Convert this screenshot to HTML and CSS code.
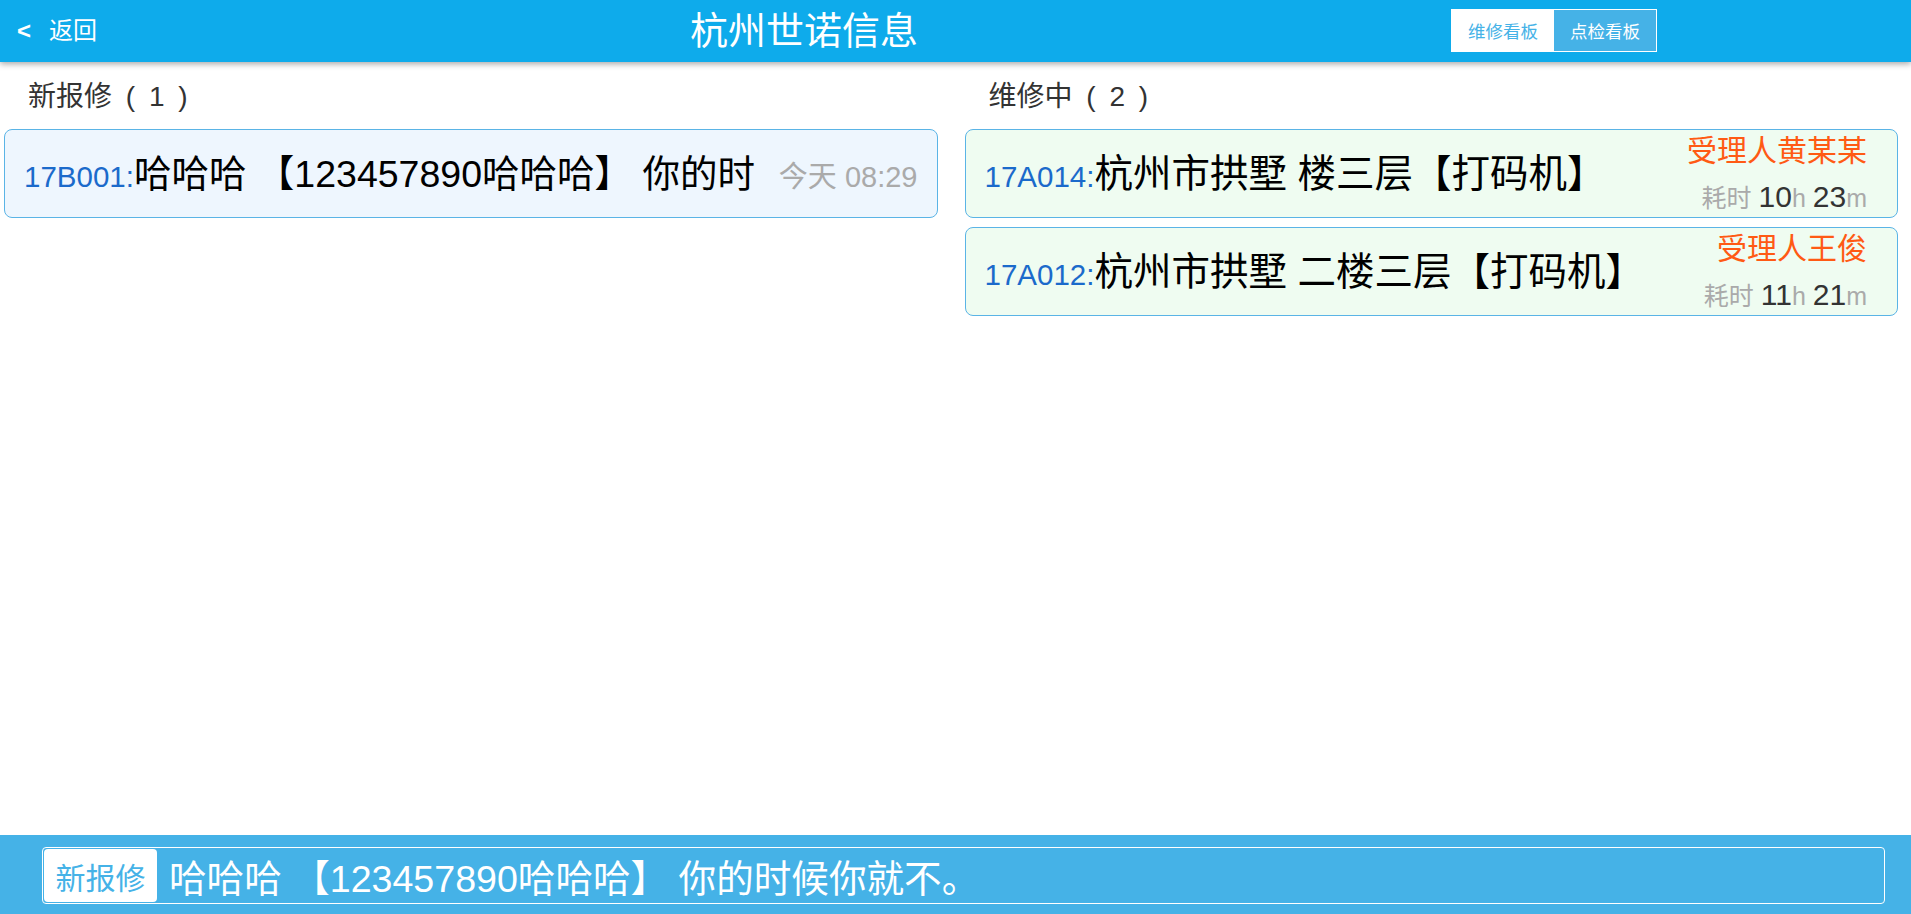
FILE: index.html
```html
<!DOCTYPE html>
<html lang="zh-CN">
<head>
<meta charset="utf-8">
<title>杭州世诺信息</title>
<link rel="stylesheet" href="styles.css">
</head>
<body>
<header class="header">
  <div class="back"><span class="back-arrow">&lt;</span><span>返回</span></div>
  <div class="title">杭州世诺信息</div>
  <div class="tabs">
    <div class="tab">维修看板</div>
    <div class="tab tab-active">点检看板</div>
  </div>
</header>
<main class="board">
  <section class="column">
    <div class="col-title">新报修 ( 1 )</div>
    <div class="card card-new">
      <div class="card-text"><span class="card-id">17B001:</span>哈哈哈 【123457890哈哈哈】 你的时候你就不。</div>
      <div class="card-time">今天 08:29</div>
    </div>
  </section>
  <section class="column">
    <div class="col-title">维修中 ( 2 )</div>
    <div class="card card-doing">
      <div class="card-text"><span class="card-id">17A014:</span>杭州市拱墅 楼三层【打码机】</div>
      <div class="card-side">
        <div class="assignee">受理人黄某某</div>
        <div class="elapsed">耗时 <span class="num">10</span>h <span class="num">23</span>m</div>
      </div>
    </div>
    <div class="card card-doing">
      <div class="card-text"><span class="card-id">17A012:</span>杭州市拱墅 二楼三层【打码机】</div>
      <div class="card-side">
        <div class="assignee">受理人王俊</div>
        <div class="elapsed">耗时 <span class="num">11</span>h <span class="num">21</span>m</div>
      </div>
    </div>
  </section>
</main>
<footer class="footer">
  <div class="ticker">
    <div class="badge">新报修</div>
    <div class="ticker-text">哈哈哈 【123457890哈哈哈】 你的时候你就不。</div>
  </div>
</footer>
</body>
</html>
```

FILE: styles.css
```css
html, body {
  margin: 0;
  padding: 0;
}

body {
  height: 100vh;
  display: flex;
  flex-direction: column;
  overflow: hidden;
  font-family: "Liberation Sans", "Noto Sans CJK SC", sans-serif;
  background: #fff;
  color: #000;
}

.header {
  flex: none;
  height: 62px;
  box-sizing: border-box;
  background: #0eabeb;
  display: flex;
  align-items: center;
  padding: 0 254px 0 17px;
  box-shadow: 0 2px 6px rgba(0, 0, 0, 0.35);
  position: relative;
  z-index: 1;
}

.back {
  width: 673px;
  color: #fff;
  font-size: 24px;
  line-height: 30px;
  display: flex;
  align-items: center;
}

.back-arrow {
  font-weight: bold;
  margin-right: 18px;
}

.title {
  flex: 1;
  color: #fff;
  font-size: 38px;
  line-height: 44px;
}

.tabs {
  display: flex;
  height: 43px;
  margin-top: -1px;
  box-sizing: border-box;
  border: 1px solid #fff;
}

.tab {
  width: 102px;
  display: flex;
  align-items: center;
  justify-content: center;
  font-size: 17.5px;
  background: #fff;
  color: #45b2e7;
}

.tab-active {
  background: #45b2e7;
  color: #fff;
}

.board {
  flex: 1;
  display: grid;
  grid-template-columns: 1fr 1fr;
  column-gap: 27px;
  align-items: start;
  padding: 0 13px 0 4px;
}

.col-title {
  height: 67px;
  box-sizing: border-box;
  padding: 0 0 4px 24px;
  display: flex;
  align-items: center;
  font-size: 28px;
  word-spacing: 6px;
  color: #333;
}

.card {
  height: 89px;
  box-sizing: border-box;
  border: 1px solid #5ab4e6;
  border-radius: 8px;
  margin-bottom: 9px;
  display: flex;
  align-items: center;
  padding: 0 19px 0 19px;
}

.card-new {
  background: #eef6fe;
}

.card-doing {
  background: #effcf1;
  padding-right: 30px;
}

.card-text {
  flex: 1;
  min-width: 0;
  height: 46px;
  overflow: hidden;
  font-size: 37.5px;
  line-height: 46px;
  color: #000;
}

.card-doing .card-text {
  font-size: 38.5px;
}

.card-id {
  font-size: 29.5px;
  color: #1b6acb;
}

.card-time {
  flex: none;
  margin-left: 12px;
  font-size: 29px;
  color: #aaa;
}

.card-side {
  flex: none;
  align-self: stretch;
  display: flex;
  flex-direction: column;
  justify-content: space-between;
  align-items: flex-end;
  padding: 4px 0 3px;
}

.assignee {
  font-size: 30px;
  line-height: 34px;
  color: #ff5a14;
}

.elapsed {
  font-size: 25px;
  line-height: 32px;
  color: #aaa;
}

.num {
  font-size: 30px;
  color: #333;
}

.footer {
  flex: none;
  height: 79px;
  box-sizing: border-box;
  background: #45b2e7;
  padding: 12px 26px 0 42px;
}

.ticker {
  height: 57px;
  box-sizing: border-box;
  border: 1px solid #fff;
  border-radius: 4px;
  display: flex;
  align-items: center;
  padding-left: 1px;
  overflow: hidden;
}

.badge {
  flex: none;
  width: 113px;
  height: 53px;
  box-sizing: border-box;
  background: #fff;
  border-radius: 4px;
  display: flex;
  align-items: center;
  justify-content: center;
  font-size: 30px;
  color: #45b2e7;
}

.ticker-text {
  margin-left: 12px;
  white-space: nowrap;
  font-size: 37.6px;
  color: #fff;
}
```
